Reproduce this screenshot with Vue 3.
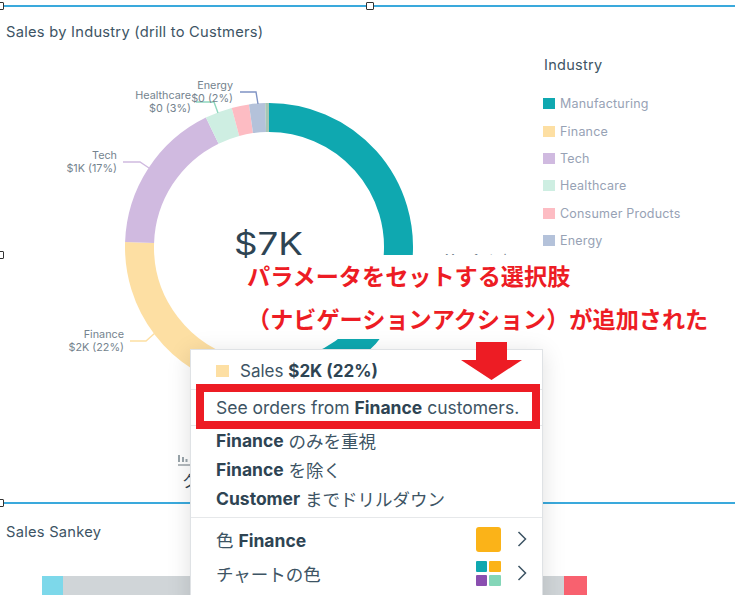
<script setup>
const cx = 269, cy = 247, r = 129.5
function arc(a0, a1) {
  const p = a => {
    const t = (a - 90) * Math.PI / 180
    return `${(cx + r * Math.cos(t)).toFixed(2)} ${(cy + r * Math.sin(t)).toFixed(2)}`
  }
  return `M${p(a0)} A${r} ${r} 0 ${a1 - a0 > 180 ? 1 : 0} 1 ${p(a1)}`
}
const segments = [
  { c: '#0fa8b0', a: 0, b: 193 },
  { c: '#fddfa3', a: 193, b: 272 },
  { c: '#d0bae0', a: 272, b: 334 },
  { c: '#ceeee2', a: 334, b: 345 },
  { c: '#fdbcc3', a: 345, b: 352 },
  { c: '#b4c2da', a: 352, b: 358.5 },
  { c: '#a7c6b4', a: 358.5, b: 360 }
].map(s => ({ c: s.c, d: arc(s.a, s.b) }))
const legend = [
  { n: 'Manufacturing', c: '#0fa8b0' },
  { n: 'Finance', c: '#fddfa3' },
  { n: 'Tech', c: '#d0bae0' },
  { n: 'Healthcare', c: '#ceeee2' },
  { n: 'Consumer Products', c: '#fdbcc3' },
  { n: 'Energy', c: '#b4c2da' }
]
const labels = [
  { x: 117, y: 159, t: 'Tech' }, { x: 117, y: 172, t: '$1K (17%)' },
  { x: 191, y: 99, t: 'Healthcare' }, { x: 191, y: 112, t: '$0 (3%)' },
  { x: 233, y: 89, t: 'Energy' }, { x: 233, y: 102, t: '$0 (2%)' },
  { x: 124, y: 338, t: 'Finance' }, { x: 124, y: 351, t: '$2K (22%)' }
]
const leaders = [
  { c: '#d0bae0', d: 'M123 162 H140 L149 168' },
  { c: '#8fd8bf', d: 'M196 102 H214 L218 113' },
  { c: '#7f93c4', d: 'M240 92 H256 L258 104' },
  { c: '#fddfa3', d: 'M130 341 H146 L155 333' }
]
</script>

<template>
  <div class="page">
    <section class="panel first">
      <h2 class="title">Sales by Industry (drill to Custmers)</h2>
      <div class="body">
        <svg class="donut" width="735" height="503" viewBox="0 0 735 503">
          <path v-for="s in segments" :key="s.c" :d="s.d" :stroke="s.c" stroke-width="29" fill="none" />
          <path v-for="l in leaders" :key="l.c" :d="l.d" :stroke="l.c" stroke-width="1.4" fill="none" />
          <text v-for="l in labels" :key="l.t" :x="l.x" :y="l.y" class="lab" text-anchor="end">{{ l.t }}</text>
          <text x="234" y="255" class="big" textLength="69" lengthAdjust="spacingAndGlyphs">$7K</text>
          <text x="445" y="262" class="lab">Manufacturing</text>
          <path d="M179 455 V462 M183 457 V462 M186.500 459 V462" stroke="#9aa5ab" stroke-width="2" fill="none" />
          <path d="M178 465 H190" stroke="#b4babe" stroke-width="2" fill="none" />
          <text x="182" y="487" class="frag">ク</text>
        </svg>
        <div class="legend">
          <div class="legend-title">Industry</div>
          <ul class="legend-list">
            <li v-for="l in legend" :key="l.n" class="legend-item">
              <span class="swatch" :style="{ background: l.c }"></span>{{ l.n }}
            </li>
          </ul>
        </div>
      </div>
    </section>

    <section class="panel second">
      <h2 class="title">Sales Sankey</h2>
      <div class="sankey">
        <span class="node cyan"></span>
        <span class="flow"></span>
        <span class="node red"></span>
      </div>
    </section>

    <i class="handle" style="left:-4px;top:2px"></i>
    <i class="handle" style="left:366px;top:2px"></i>
    <i class="handle" style="left:-4px;top:251px"></i>
    <i class="handle" style="left:-4px;top:499px"></i>

    <div class="callout">
      <p>パラメータをセットする選択肢</p>
      <p>（ナビゲーションアクション）が追加された</p>
    </div>

    <div class="menu">
      <div class="row head"><span class="menu-swatch"></span>Sales&nbsp;<b>$2K (22%)</b></div>
      <div class="row action">See orders from&nbsp;<b>Finance</b>&nbsp;customers.</div>
      <div class="group">
        <div class="row tight"><b>Finance</b>&nbsp;のみを重視</div>
        <div class="row tight"><b>Finance</b>&nbsp;を除く</div>
        <div class="row tight"><b>Customer</b>&nbsp;までドリルダウン</div>
      </div>
      <div class="colors">
        <div class="row color">
          <span>色&nbsp;<b>Finance</b></span>
          <span class="color-end">
            <span class="chip"></span>
            <svg class="chev" width="10" height="16" viewBox="0 0 10 16"><path d="M1.500 1 L8.500 8 L1.500 15" /></svg>
          </span>
        </div>
        <div class="row color">
          <span>チャートの色</span>
          <span class="color-end">
            <span class="palette"><i class="p1"></i><i class="p2"></i><i class="p3"></i><i class="p4"></i></span>
            <svg class="chev" width="10" height="16" viewBox="0 0 10 16"><path d="M1.500 1 L8.500 8 L1.500 15" /></svg>
          </span>
        </div>
      </div>
    </div>

    <div class="redbox"></div>
    <svg class="arrow" width="63" height="40" viewBox="0 0 63 40">
      <polygon points="16,0 47,0 47,18 62,18 31.500,38 1,18 16,18" fill="#ed1c24" />
    </svg>
  </div>
</template>

<style scoped>
.page {
  position: relative;
  width: 735px;
  height: 595px;
  overflow: hidden;
  background: #fff;
  font-family: Inter, "Noto Sans CJK JP", sans-serif;
  color: #2e4453;
}
.panel { box-sizing: border-box; }
.first {
  position: relative;
  height: 497px;
  margin-top: 5px;
  border-top: 2px solid #3aa9dc;
  padding: 16px 0 0 6px;
}
.second {
  height: 93px;
  border-top: 2px solid #3aa9dc;
  padding: 19px 0 0 6px;
}
.title {
  margin: 0;
  font-size: 14.700px;
  line-height: 18px;
  font-weight: 400;
  letter-spacing: 0.25px;
  color: #3d5464;
}
.body { display: flex; justify-content: flex-end; }
.donut { position: absolute; left: 0; top: -7px; }
.lab { font-size: 10.800px; fill: #74838e; }
.big { font-size: 31px; font-weight: 400; fill: #2e4453; }
.frag { font-size: 16px; fill: #2e4453; }
.legend { position: relative; width: 192px; margin-top: 15px; }
.legend-title { font-size: 14.500px; line-height: 18px; color: #3d5464; letter-spacing: 0.3px; margin-left: 1px; }
.legend-list { list-style: none; margin: 16px 0 0; padding: 0; }
.legend-item {
  display: flex;
  align-items: center;
  height: 27.400px;
  font-size: 12.500px;
  color: #97a2b5;
  letter-spacing: 0.2px;
}
.swatch { width: 12px; height: 11px; margin-right: 5px; }
.sankey { display: flex; margin: 35px 0 0 36px; height: 30px; }
.node { display: block; height: 30px; }
.cyan { width: 21px; background: #7dd8ea; }
.flow { width: 501px; background: #d0d5d8; }
.red { width: 23px; background: #f8616f; }
.handle {
  position: absolute;
  width: 6px;
  height: 6px;
  background: #fff;
  border: 1px solid #333;
  border-radius: 1px;
}
.callout {
  position: absolute;
  left: 250px;
  top: 255px;
  width: 485px;
  height: 84px;
  background: #fff;
  color: #ed1c24;
  font-family: "Noto Sans CJK JP", sans-serif;
  font-size: 23.150px;
  font-weight: 700;
  line-height: 40px;
}
.callout p { margin: 0 0 0 -3px; white-space: nowrap; height: 43px; }
.menu {
  position: absolute;
  left: 190px;
  top: 349px;
  width: 353px;
  height: 260px;
  box-sizing: border-box;
  background: #fff;
  border: 1px solid #dfe2e5;
  box-shadow: 0 4px 22px rgba(0, 0, 0, .13);
  font-size: 17.500px;
  color: #3d5464;
}
.menu b { font-weight: 700; color: #2e4453; }
.row {
  display: flex;
  align-items: center;
  padding: 0 15px 0 25px;
  white-space: nowrap;
}
.head { height: 37px; padding-top: 2px; border-bottom: 1px solid #e6e8ea; font-size: 17px; }
.menu-swatch { width: 13px; height: 12px; margin-right: 11px; background: #fddfa3; }
.action { height: 35px; border-bottom: 1px solid #e6e8ea; }
.group { border-bottom: 1px solid #e6e8ea; height: 92px; box-sizing: border-box; }
.tight { height: 29px; }
.colors { padding-top: 4px; }
.color { justify-content: space-between; height: 34px; }
.color-end { display: flex; align-items: center; gap: 16px; }
.chip { width: 25px; height: 25px; background: #fbb318; border-radius: 3px; }
.palette {
  display: grid;
  grid-template-columns: 11px 12px;
  grid-template-rows: 11px 11px;
  gap: 3px 2px;
}
.palette i { border-radius: 1px; }
.p1 { background: #0fa8b0; }
.p2 { background: #fbb318; }
.p3 { background: #8a4fb0; }
.p4 { background: #84d6b8; }
.chev path { fill: none; stroke: #3d5464; stroke-width: 1.500; }
.redbox {
  position: absolute;
  left: 196px;
  top: 384px;
  width: 344px;
  height: 45px;
  box-sizing: border-box;
  border: 8px solid #ed1c24;
}
.arrow { position: absolute; left: 460px; top: 342px; }
</style>
